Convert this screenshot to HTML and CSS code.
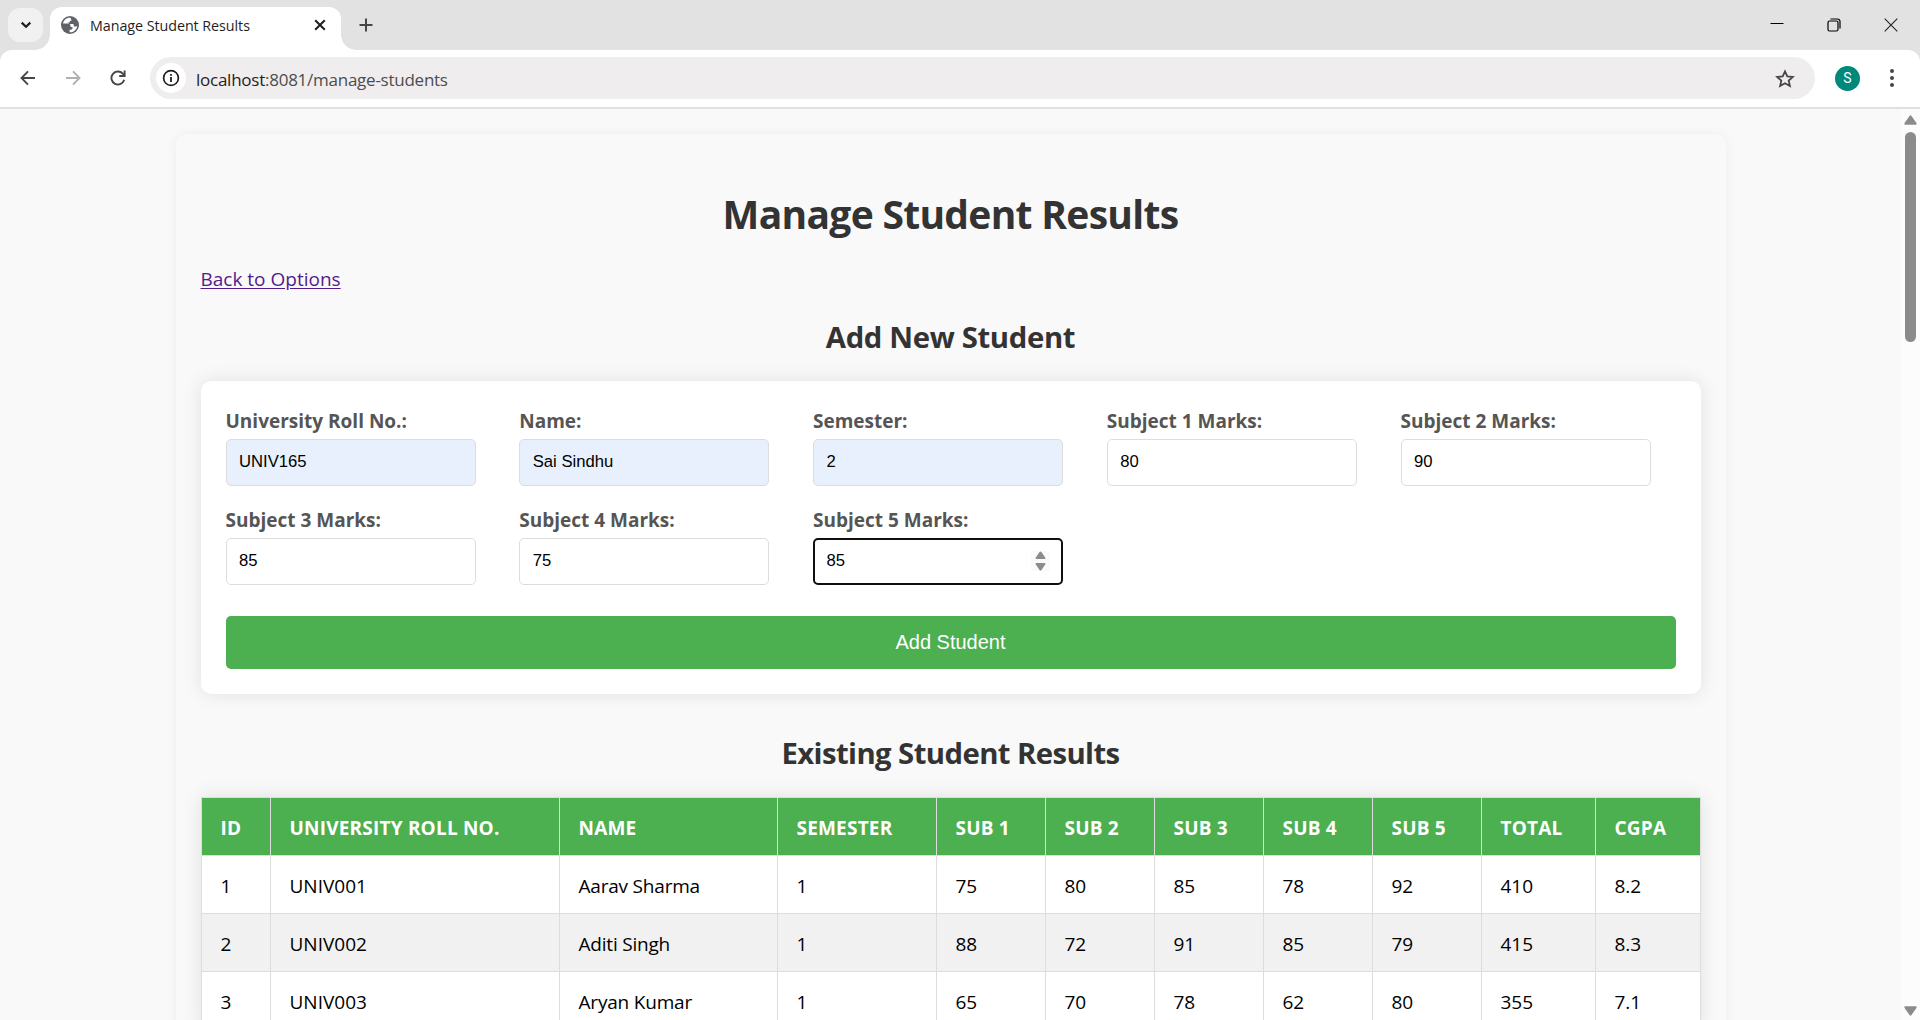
FILE: index.html
```html
<!DOCTYPE html>
<html lang="en">
<head>
<meta charset="utf-8">
<title>Manage Student Results</title>
<link rel="stylesheet" href="styles.css">
</head>
<body>
<div class="browser">
  <div class="tabstrip">
    <div class="tab-search"><svg width="12" height="8" viewBox="0 0 12 8"><path d="M1.7 1.6 6 5.8l4.3-4.2" fill="none" stroke="#1f1f1f" stroke-width="2.2"/></svg></div>
    <div class="tab">
      <svg class="favicon" width="18" height="18" viewBox="0 0 18 18"><circle cx="9" cy="9" r="9" fill="#5f6368"/><path d="M9.500 1.800C6 1.400 2.600 3.800 2 7.600h4.800c1.800 0 2.700.9 2.700 2.300v1h2v1.200c0 1-.8 1.700-1.700 1.700H8.600v2.500c3.800.3 7.300-2.600 7.600-6.400-.6.500-1.300.7-2.200.7h-1.200V9.300c0-.7-.5-1.200-1.200-1.200H7.400V6.300h1.500V4.700h1.700z" fill="#fff"/></svg>
      <span class="tab-title">Manage Student Results</span>
      <svg class="tab-close" width="12" height="12" viewBox="0 0 12 12"><path d="m1.200 1.200 9.600 9.600m0-9.600-9.600 9.600" stroke="#1f1f1f" stroke-width="2"/></svg>
    </div>
    <svg class="new-tab" width="14" height="14" viewBox="0 0 14 14"><path d="M7 .5v13M.5 7h13" stroke="#444746" stroke-width="2"/></svg>
    <div class="window-controls">
      <svg width="14" height="14" viewBox="0 0 14 14"><path d="M.5 5.500h13" stroke="#000"/></svg>
      <svg width="14" height="14" viewBox="0 0 14 14"><rect x="1" y="3" width="10" height="10" rx="1.500" fill="none" stroke="#000" stroke-width="1.200"/><path d="M3.500 1H10.500a2.500 2.500 0 0 1 2.500 2.500V10.500" fill="none" stroke="#000" stroke-width="1.200"/></svg>
      <svg width="14" height="14" viewBox="0 0 14 14"><path d="m.7.7 12.600 12.600m0-12.600L.7 13.300" stroke="#222" stroke-width="1.100"/></svg>
    </div>
  </div>
  <div class="toolbar">
    <svg class="nav" width="16" height="16" viewBox="0 0 16 16"><path d="M15 8H2M8 1.300 1.500 8 8 14.700" fill="none" stroke="#444746" stroke-width="1.900"/></svg>
    <svg class="nav" width="16" height="16" viewBox="0 0 16 16"><path d="M1 8h13M8 1.300 14.500 8 8 14.700" fill="none" stroke="#b1b1b1" stroke-width="1.900"/></svg>
    <svg class="nav" width="16" height="16" viewBox="0 0 16 16"><path d="M14.200 9.800A6.500 6.500 0 1 1 12.800 3.700L14.600 5.500M14.600.5V6H9.200" fill="none" stroke="#444746" stroke-width="1.900"/></svg>
    <div class="omnibox">
      <div class="site-info"><svg width="18" height="18" viewBox="0 0 18 18"><circle cx="9" cy="9" r="7.400" fill="none" stroke="#1f1f1f" stroke-width="1.700"/><path d="M9 8v5M9 5v1.800" stroke="#1f1f1f" stroke-width="1.800"/></svg></div>
      <span class="url"><span class="host">localhost</span>:8081/manage-students</span>
      <svg class="star" width="20" height="19" viewBox="0 0 20 19"><path d="m10 2.300 2.300 5 5.500.6-4.100 3.700 1.200 5.400L10 14.200 5.100 17l1.200-5.400L2.200 7.900l5.500-.6z" fill="none" stroke="#444746" stroke-width="1.800"/></svg>
    </div>
    <div class="avatar">S</div>
    <svg class="menu" width="4" height="18" viewBox="0 0 4 18"><g fill="#444746"><circle cx="2" cy="2" r="2"/><circle cx="2" cy="9" r="2"/><circle cx="2" cy="16" r="2"/></g></svg>
  </div>
  <div class="viewport">
    <main class="page">
      <div class="container">
        <h1>Manage Student Results</h1>
        <a class="back" href="#">Back to Options</a>
        <h2 class="h-add">Add New Student</h2>
        <form class="card">
          <div class="fields">
            <label class="field"><span>University Roll No.:</span><input class="autofill" value="UNIV165"></label>
            <label class="field"><span>Name:</span><input class="autofill" value="Sai Sindhu"></label>
            <label class="field"><span>Semester:</span><input class="autofill" value="2"></label>
            <label class="field"><span>Subject 1 Marks:</span><input value="80"></label>
            <label class="field"><span>Subject 2 Marks:</span><input value="90"></label>
            <label class="field"><span>Subject 3 Marks:</span><input value="85"></label>
            <label class="field"><span>Subject 4 Marks:</span><input value="75"></label>
            <label class="field"><span>Subject 5 Marks:</span><input class="focused" value="85"><svg class="spinner" width="19" height="20" viewBox="0 0 19 20"><path fill="#fafafa" d="M0 0h19v20H0z"/><path d="M4.500 7 8.500 1q1-1 2 0l4 6q0 1-1 1h-8q-1 0-1-1zM4.500 13l4 6q1 1 2 0l4-6q0-1-1-1h-8q-1 0-1 1z" fill="#8b8b8b"/></svg></label>
          </div>
          <button type="button" class="submit">Add Student</button>
        </form>
        <h2 class="h-list">Existing Student Results</h2>
        <table class="results">
          <colgroup><col style="width:69px"><col style="width:289px"><col style="width:218px"><col style="width:159px"><col style="width:109px"><col style="width:109px"><col style="width:109px"><col style="width:109px"><col style="width:109px"><col style="width:114px"><col style="width:105px"></colgroup>
          <thead><tr><th>ID</th><th>UNIVERSITY ROLL NO.</th><th>NAME</th><th>SEMESTER</th><th>SUB 1</th><th>SUB 2</th><th>SUB 3</th><th>SUB 4</th><th>SUB 5</th><th>TOTAL</th><th>CGPA</th></tr></thead>
          <tbody>
            <tr><td>1</td><td>UNIV001</td><td>Aarav Sharma</td><td>1</td><td>75</td><td>80</td><td>85</td><td>78</td><td>92</td><td>410</td><td>8.2</td></tr>
            <tr><td>2</td><td>UNIV002</td><td>Aditi Singh</td><td>1</td><td>88</td><td>72</td><td>91</td><td>85</td><td>79</td><td>415</td><td>8.3</td></tr>
            <tr><td>3</td><td>UNIV003</td><td>Aryan Kumar</td><td>1</td><td>65</td><td>70</td><td>78</td><td>62</td><td>80</td><td>355</td><td>7.1</td></tr>
          </tbody>
        </table>
      </div>
    </main>
    <div class="scrollbar">
      <svg width="13" height="10" viewBox="0 0 13 10"><path d="M.4 8.200 5.500.9q1-1.300 2 0l5.100 7.300q.4 1.500-1 1.500H1.400q-1.400 0-1-1.500z" fill="#8b8b8b"/></svg>
      <div class="thumb"></div>
      <svg class="down" width="13" height="10" viewBox="0 0 13 10"><path d="M.4 1.800 5.500 9.100q1 1.300 2 0l5.100-7.300q.4-1.500-1-1.500H1.400q-1.400 0-1 1.500z" fill="#8b8b8b"/></svg>
    </div>
  </div>
</div>
</body>
</html>
```
FILE: styles.css
```css
* { box-sizing: border-box; }

body {
  margin: 0;
  font-family: "Open Sans", "Noto Sans", sans-serif;
  color: #000;
}

svg { display: block; flex: none; }

.browser {
  display: flex;
  flex-direction: column;
  width: 1920px;
  height: 1020px;
  overflow: hidden;
  background: #e2e2e2;
}

/* Tab strip */
.tabstrip {
  display: flex;
  align-items: flex-start;
  height: 50px;
  padding: 8px 20px 0 8px;
}

.tab-search {
  display: grid;
  place-items: center;
  width: 35px;
  height: 34px;
  border-radius: 12px;
  background: #f1f1f1;
}

.tab {
  position: relative;
  display: flex;
  align-items: center;
  width: 291px;
  height: 43px;
  margin: -1px 0 0 7px;
  padding: 0 15px 7px 11px;
  border-radius: 12px 12px 0 0;
  background: #fff;
}

.tab::before,
.tab::after {
  content: "";
  position: absolute;
  bottom: 0;
  width: 15px;
  height: 15px;
}

.tab::before {
  left: -15px;
  background: radial-gradient(circle at 0 0, transparent 14.5px, #fff 15px);
}

.tab::after {
  right: -15px;
  background: radial-gradient(circle at 100% 0, transparent 14.5px, #fff 15px);
}

.tab-title {
  margin-left: 11px;
  font-size: 14.3px;
  letter-spacing: -0.05px;
  color: #1f1f1f;
  white-space: nowrap;
}

.tab-close { margin-left: auto; }

.new-tab { margin: 10px 0 0 18px; }

.window-controls {
  display: flex;
  gap: 43px;
  margin: 10px 2px 0 auto;
}

/* Toolbar */
.toolbar {
  display: flex;
  align-items: center;
  height: 59px;
  padding: 0 26px 1px 20px;
  border-bottom: 2px solid #e0e0e0;
  border-radius: 12px 12px 0 0;
  background: #fff;
}

.nav { margin-right: 29px; }

.omnibox {
  display: flex;
  align-items: center;
  width: 1665px;
  height: 42px;
  margin-left: -5px;
  padding: 0 20px 0 6px;
  border-radius: 21px;
  background: #f0edee;
}

.site-info {
  display: grid;
  place-items: center;
  width: 30px;
  height: 30px;
  border-radius: 50%;
  background: #fff;
}

.url {
  margin: 2px 0 0 10px;
  font-size: 17px;
  letter-spacing: -0.25px;
  color: #4d4d4d;
}

.host { color: #1f1f1f; }

.star { margin: 1px 0 0 auto; }

.avatar {
  width: 25px;
  height: 25px;
  margin-left: 20px;
  border-radius: 50%;
  background: #00897b;
  color: #fff;
  font: 14px/25px Roboto, sans-serif;
  text-align: center;
}

.menu { margin-left: auto; }

/* Page area */
.viewport {
  display: flex;
  flex: 1;
  min-height: 0;
  background: #f9f9f9;
}

.page {
  flex: 1;
  overflow: hidden;
  padding-top: 25px;
}

.container {
  display: flex;
  flex-direction: column;
  width: 1550px;
  height: 1100px;
  margin: 0 auto;
  padding: 0 25px;
  border-radius: 10px;
  background: #f9f9f9;
  box-shadow: 0 0 12px rgba(0, 0, 0, 0.05);
}

h1, h2 {
  margin: 0;
  color: #333;
  text-align: center;
}

h1 {
  margin-top: 53px;
  font-size: 39px;
  line-height: 54px;
  letter-spacing: -0.7px;
}

.back {
  align-self: flex-start;
  margin-top: 25px;
  font-size: 19px;
  line-height: 27px;
  color: #551a8b;
  text-underline-offset: 2px;
}

h2 { font-size: 29.3px; line-height: 40px; }

.h-add { margin-top: 24px; letter-spacing: -0.35px; }

.card {
  height: 313px;
  margin-top: 24px;
  padding: 25px;
  border-radius: 10px;
  background: #fff;
  box-shadow: 0 0 19px rgba(0, 0, 0, 0.1);
}

.fields {
  display: grid;
  grid-template-columns: repeat(5, 275px);
  column-gap: 18.75px;
}

.field {
  position: relative;
  display: block;
  height: 99px;
}

.field span {
  display: block;
  height: 33px;
  font-size: 19px;
  font-weight: 700;
  line-height: 31px;
  color: #555;
}

.field input {
  display: block;
  width: 250px;
  height: 47px;
  padding: 0 12px 1px 12.5px;
  border: 1px solid #ddd;
  border-radius: 5px;
  background: #fff;
  font: 16.67px "Liberation Sans", Arial, sans-serif;
  color: #000;
  outline: none;
}

.field .autofill { background: #e8f0fe; }

.field .focused {
  padding: 0 11px 1px 11.5px;
  border: 2px solid #101010;
}

.spinner {
  position: absolute;
  left: 218px;
  top: 46px;
}

.submit {
  display: block;
  width: 100%;
  height: 53px;
  margin-top: 12px;
  padding: 0 0 1px;
  border: 0;
  border-radius: 5px;
  background: #4caf50;
  color: #fff;
  font: 20px "Liberation Sans", Arial, sans-serif;
}

.h-list { margin-top: 39px; letter-spacing: -0.58px; }

.results {
  width: 1499px;
  margin: 24px 0 0;
  table-layout: fixed;
  border-collapse: collapse;
  background: #fff;
  box-shadow: 0 0 19px rgba(0, 0, 0, 0.1);
}

.results th,
.results td {
  height: 58px;
  padding: 3px 0 0 19px;
  border: 1px solid #ddd;
  text-align: left;
  font-size: 19px;
  line-height: 26px;
  white-space: nowrap;
}

.results th {
  background: #4caf50;
  color: #fff;
  letter-spacing: 0.2px;
}

.results td:nth-child(3) { letter-spacing: -0.2px; }

.results tbody tr:nth-child(even) { background: #f1f1f1; }

.scrollbar {
  display: flex;
  flex-direction: column;
  align-items: center;
  width: 19px;
  padding: 6px 0 4px;
  background: #fcfcfc;
}

.thumb {
  width: 11px;
  height: 210px;
  margin-top: 7px;
  border-radius: 6px;
  background: #8b8b8b;
}

.down { margin-top: auto; }
```
